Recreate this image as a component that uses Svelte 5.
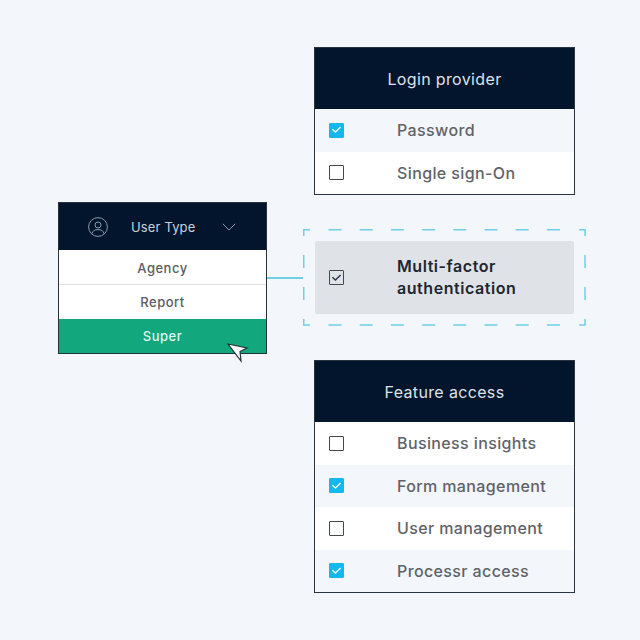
<script>
  const login = [
    { label: 'Password', checked: true, tint: true },
    { label: 'Single sign-On', checked: false, tint: false }
  ];
  const features = [
    { label: 'Business insights', checked: false, tint: false },
    { label: 'Form management', checked: true, tint: true },
    { label: 'User management', checked: false, tint: false },
    { label: 'Processr access', checked: true, tint: true }
  ];
</script>

{#snippet box(checked, dark)}
  <span class="box" class:on={checked} class:dark>
    {#if checked}
      <svg viewBox="0 0 15 15" width="15" height="15" aria-hidden="true">
        <path d="M3.4 7.2 6.4 10 11.6 5" fill="none" stroke={dark ? '#2b3643' : '#eefaff'} stroke-width="1.4" />
      </svg>
    {/if}
  </span>
{/snippet}

{#snippet panel(title, rows)}
  <section class="panel">
    <h2>{title}</h2>
    {#each rows as row}
      <div class="row" class:tint={row.tint}>
        {@render box(row.checked, false)}
        <span>{row.label}</span>
      </div>
    {/each}
  </section>
{/snippet}

<main class="page">
  <div class="left">
    <div class="menu">
      <header>
        <svg class="user" viewBox="0 0 20 20" width="20" height="20" aria-hidden="true">
          <circle cx="10" cy="10" r="9.4" />
          <circle cx="10" cy="8" r="3" />
          <path d="M4 16.6C4.6 13.8 6.6 12.6 10 12.6S15.4 13.8 16 16.6" />
        </svg>
        <span>User Type</span>
        <svg class="chev" viewBox="0 0 14 8" width="14" height="8" aria-hidden="true">
          <path d="M.8.8 7 7 13.2.8" />
        </svg>
      </header>
      <div class="item">Agency</div>
      <div class="item">Report</div>
      <div class="item active">Super</div>
      <svg class="cursor" viewBox="0 0 22 20" width="22" height="20" aria-hidden="true">
        <path d="M1 1 20 5 13 8.5 14 18Z" />
      </svg>
    </div>
    <div class="link"></div>
  </div>

  <div class="right">
    {@render panel('Login provider', login)}

    <div class="focus">
      <svg class="dash" viewBox="0 0 283 97" width="283" height="97" aria-hidden="true">
        <path d="M.75 7V.75H7M276 .75H282V7M.75 90V96H7M276 96H282V90" />
        <path class="d" d="M25.5 .75H265M25.5 96H265" />
        <path class="v" d="M.75 26V80M282 26V80" />
      </svg>
      <div class="mfa">
        {@render box(true, true)}
        <span class="mfa-text">Multi-factor<br />authentication</span>
      </div>
    </div>

    {@render panel('Feature access', features)}
  </div>
</main>

<style>
  :global(body) {
    margin: 0;
    background: #f3f6fb;
  }
  .page {
    width: 640px;
    height: 640px;
    box-sizing: border-box;
    padding: 47px 0 0 58px;
    display: flex;
    align-items: flex-start;
    font-family: "Inter", "Liberation Sans", sans-serif;
    background: #f3f6fb;
  }
  .left {
    display: flex;
    align-items: center;
    margin-top: 155px;
  }
  .menu {
    position: relative;
    width: 209px;
    box-sizing: border-box;
    border: 1px solid #26323c;
    background: #fff;
  }
  .menu header {
    height: 47px;
    background: #03152d;
    color: #c9d2db;
    font-size: 13px;
    display: flex;
    align-items: center;
    padding-left: 29px;
    letter-spacing: 0.15px;
  }
  .menu header span {
    margin-left: 23px;
    width: 83px;
  }
  .user {
    fill: none;
    stroke: #7fa0a6;
    stroke-width: 1;
  }
  .chev {
    margin-left: 8px;
    fill: none;
    stroke: #7fa0a6;
    stroke-width: 1;
  }
  .item {
    height: 34.4px;
    display: flex;
    align-items: center;
    justify-content: center;
    font-size: 13px;
    font-weight: 550;
    color: #5a5d61;
    letter-spacing: 0.5px;
    border-top: 1px solid #dfe1e3;
    box-sizing: border-box;
  }
  .item:nth-of-type(1) {
    border-top: 0;
    padding-top: 1px;
  }
  .item.active {
    background: #12a77c;
    color: #dff8f1;
    border-top: 0;
  }
  .cursor {
    position: absolute;
    left: 168px;
    top: 140px;
    fill: #fff;
    stroke: #26323c;
    stroke-width: 1.2;
    stroke-linejoin: miter;
  }
  .link {
    width: 36px;
    height: 2px;
    background: #6fd0e4;
  }
  .right {
    display: flex;
    flex-direction: column;
    gap: 34px;
    align-items: center;
    width: 283px;
  }
  .panel {
    width: 261px;
    box-sizing: border-box;
    border: 1px solid #2a343e;
  }
  .panel h2 {
    margin: 0;
    height: 61px;
    display: flex;
    align-items: center;
    justify-content: center;
    background: #03152d;
    color: #dde3e9;
    font-size: 16px;
    font-weight: 400;
    letter-spacing: 0.35px;
  }
  .row {
    height: 42.5px;
    display: flex;
    align-items: center;
    background: #fff;
    padding-left: 14px;
    gap: 53px;
    color: #5f6368;
    font-size: 16px;
    font-weight: 550;
    letter-spacing: 0.38px;
  }
  .row.tint {
    background: #f3f6fb;
  }
  .box {
    width: 15px;
    height: 15px;
    box-sizing: border-box;
    border: 1.5px solid #3f4853;
    border-radius: 1px;
    flex: none;
    position: relative;
  }
  .box.on {
    background: #14b7ee;
    border-color: #14b7ee;
  }
  .box.on.dark {
    background: transparent;
    border-color: #3f4853;
  }
  .box svg {
    position: absolute;
    left: -1.5px;
    top: -1.5px;
  }
  .focus {
    position: relative;
    width: 283px;
    height: 97px;
    box-sizing: border-box;
    padding: 12px;
  }
  .dash {
    position: absolute;
    left: 0;
    top: 0;
    fill: none;
    stroke: #6fd0e8;
    stroke-width: 1.5;
  }
  .dash .d {
    stroke-dasharray: 13 18.2;
  }
  .dash .v {
    stroke-dasharray: 13 19;
  }
  .mfa {
    position: relative;
    height: 73px;
    background: #dfe3e7;
    border-radius: 2px;
    display: flex;
    align-items: center;
    padding-left: 14px;
    gap: 53px;
    color: #20262f;
    font-size: 16px;
    font-weight: 600;
    line-height: 22px;
    letter-spacing: 0.55px;
  }
  .mfa-text {
    margin-top: -1px;
  }
</style>
